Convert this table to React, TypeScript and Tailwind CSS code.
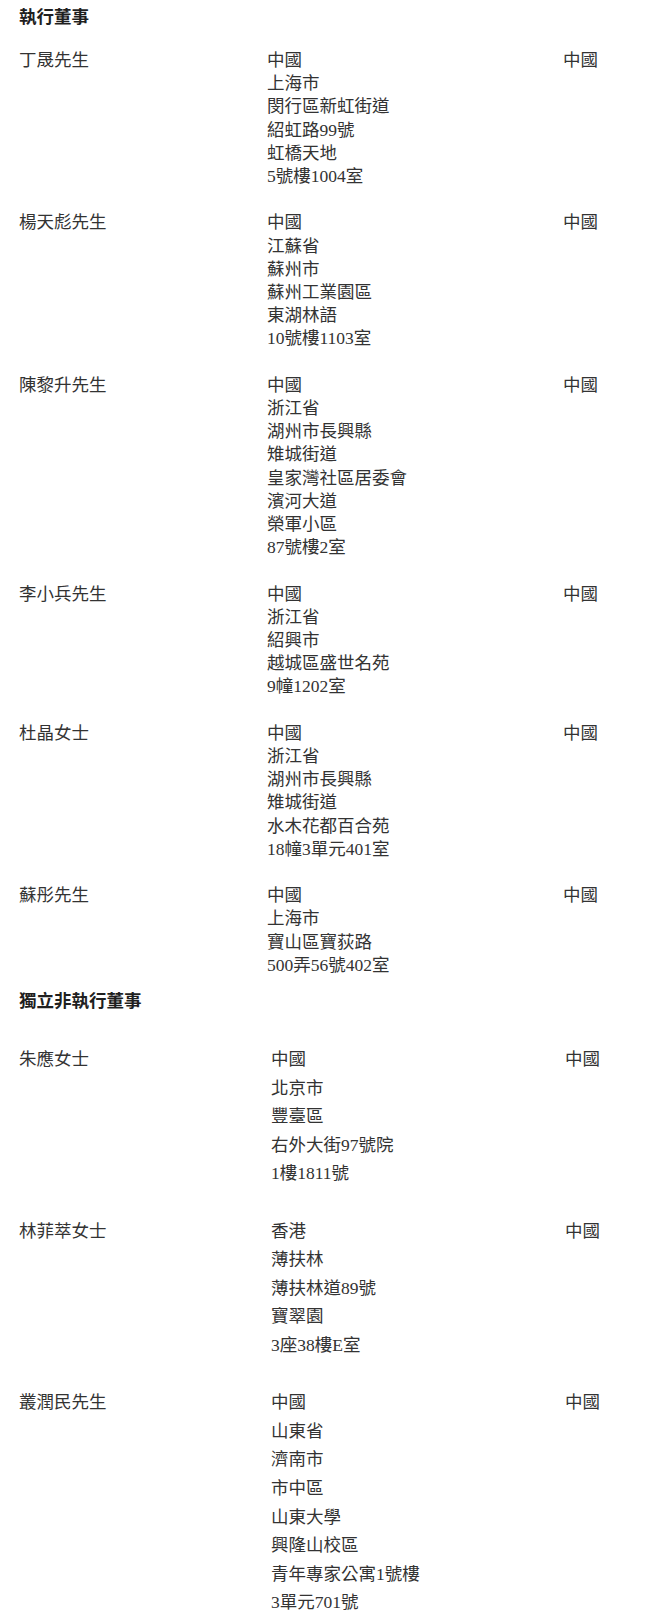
const font = {
  fontFamily: '"Liberation Serif", "Noto Sans CJK TC", serif',
};

interface Director {
  name: string;
  address: string[];
  nationality: string;
}

const executive: Director[] = [
  {
    name: "丁晟先生",
    address: ["中國", "上海市", "閔行區新虹街道", "紹虹路99號", "虹橋天地", "5號樓1004室"],
    nationality: "中國",
  },
  {
    name: "楊天彪先生",
    address: ["中國", "江蘇省", "蘇州市", "蘇州工業園區", "東湖林語", "10號樓1103室"],
    nationality: "中國",
  },
  {
    name: "陳黎升先生",
    address: ["中國", "浙江省", "湖州市長興縣", "雉城街道", "皇家灣社區居委會", "濱河大道", "榮軍小區", "87號樓2室"],
    nationality: "中國",
  },
  {
    name: "李小兵先生",
    address: ["中國", "浙江省", "紹興市", "越城區盛世名苑", "9幢1202室"],
    nationality: "中國",
  },
  {
    name: "杜晶女士",
    address: ["中國", "浙江省", "湖州市長興縣", "雉城街道", "水木花都百合苑", "18幢3單元401室"],
    nationality: "中國",
  },
  {
    name: "蘇彤先生",
    address: ["中國", "上海市", "寶山區寶荻路", "500弄56號402室"],
    nationality: "中國",
  },
];

const independent: Director[] = [
  {
    name: "朱應女士",
    address: ["中國", "北京市", "豐臺區", "右外大街97號院", "1樓1811號"],
    nationality: "中國",
  },
  {
    name: "林菲萃女士",
    address: ["香港", "薄扶林", "薄扶林道89號", "寶翠園", "3座38樓E室"],
    nationality: "中國",
  },
  {
    name: "叢潤民先生",
    address: ["中國", "山東省", "濟南市", "市中區", "山東大學", "興隆山校區", "青年專家公寓1號樓", "3單元701號"],
    nationality: "中國",
  },
];

export default function App() {
  return (
    <div className="min-h-[1620px] w-[660px] bg-white pl-[19px] pt-[6px] text-[17.5px] text-[#333333]" style={font}>
      <h2 className="font-bold leading-[23px] text-[#1f1f1f]">執行董事</h2>

      {/* executive directors */}
      <div className="mt-[20px] flex flex-col gap-[23.2px]">
        {executive.map((d) => (
          <div key={d.name} className="grid grid-cols-[248px_296px_1fr] leading-[23.2px]">
            <div>{d.name}</div>
            <div>
              {d.address.map((line) => (
                <div key={line}>{line}</div>
              ))}
            </div>
            <div>{d.nationality}</div>
          </div>
        ))}
      </div>

      <h2 className="mt-[13px] font-bold leading-[23px] text-[#1f1f1f]">獨立非執行董事</h2>

      {/* independent non-executive directors */}
      <div className="mt-[32px] flex flex-col gap-[28.6px]">
        {independent.map((d) => (
          <div key={d.name} className="grid grid-cols-[252px_294px_1fr] leading-[28.6px]">
            <div>{d.name}</div>
            <div>
              {d.address.map((line) => (
                <div key={line}>{line}</div>
              ))}
            </div>
            <div>{d.nationality}</div>
          </div>
        ))}
      </div>
    </div>
  );
}
